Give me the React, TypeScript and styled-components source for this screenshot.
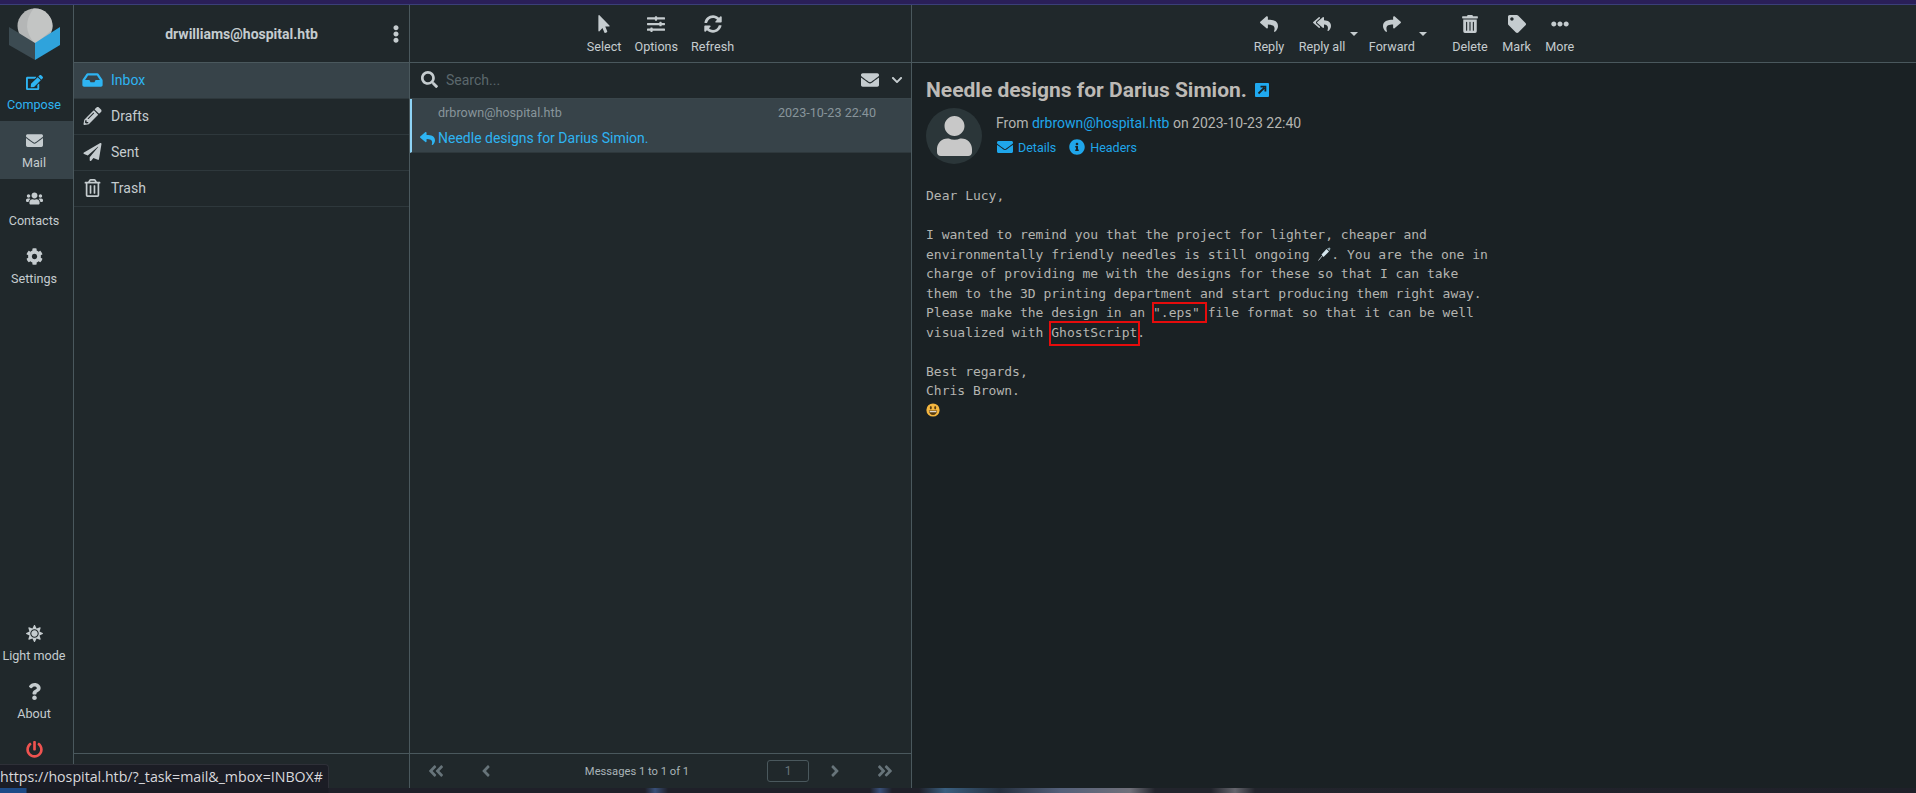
import React from 'react';
import styled, { createGlobalStyle } from 'styled-components';
import {
  FaEdit, FaEnvelope, FaUsers, FaCog, FaSun, FaQuestion, FaPowerOff, FaInbox, FaPencilAlt, FaPaperPlane,
  FaRegTrashAlt, FaEllipsisV, FaMousePointer, FaSlidersH, FaSyncAlt, FaSearch, FaChevronDown, FaReply,
  FaReplyAll, FaShare, FaTrashAlt, FaTag, FaEllipsisH, FaAngleDoubleLeft, FaAngleDoubleRight, FaAngleLeft,
  FaAngleRight, FaInfoCircle, FaUser,
} from 'react-icons/fa';

const Global = createGlobalStyle`
  html, body { margin: 0; padding: 0; height: 100%; background: #1f2029; overflow: hidden; }
  #root { height: 100%; }
  * { box-sizing: border-box; }
`;

const Page = styled.div`
  height: 793px; display: flex; flex-direction: column; position: relative;
  font-family: Roboto, "Liberation Sans", sans-serif; color: #c5cccf; font-size: 14px;
`;
const TopStrip = styled.div`
  height: 5px; flex: none; background: #2a1f58; border-bottom: 1px solid #3a3f78;
`;
const BottomStrip = styled.div`
  height: 5px; flex: none;
  background: linear-gradient(90deg, #1d4a86 0, #1d4a86 26px, #1a1c24 27px, #1a1c24 328px, #1f2029 329px, #1f2029 645px, #39507a 655px, #1f2029 668px, #1f2029 870px, #39507a 880px, #1f2029 892px, #1f2029 919px, #3a5f80 945px, #25303f 1000px, #54607a 1060px, #70707a 1130px, #22242c 1155px, #22242c 1211px, #66666e 1235px, #22242c 1255px, #1f2029 100%);
`;
const Main = styled.div`
  flex: 1; min-height: 0; display: flex;
`;
const Sidebar = styled.nav`
  width: 74px; flex: none; display: flex; flex-direction: column; background: #20282b;
  border-right: 1px solid #4a585d;
`;
const Logo = styled.div`
  height: 58px; flex: none; display: flex; align-items: flex-start; justify-content: flex-start;
`;
const Spacer = styled.div`
  flex: 1;
`;
const NavItem = styled.div<{ $active?: boolean; $accent?: boolean; $danger?: boolean }>`
  height: 58px; flex: none; display: flex; flex-direction: column; align-items: center; padding: 11px 5px 0 0;
  font-size: 12.6px; line-height: 16px; white-space: nowrap;
  background: ${p => (p.$active ? '#374349' : 'transparent')};
  color: ${p => (p.$accent ? '#2eb4f2' : p.$danger ? '#ef5350' : '#c5cccf')};
  svg { height: 17px; width: auto; margin-bottom: 6px; flex: none; }
`;
const FolderColumn = styled.section`
  width: 336px; flex: none; display: flex; flex-direction: column; background: #20282b;
  border-right: 1px solid #4a585d;
`;
const ListColumn = styled.section`
  width: 502px; flex: none; display: flex; flex-direction: column; background: #20282b;
  border-right: 1px solid #4a585d;
`;
const ContentColumn = styled.section`
  flex: 1; min-width: 0; display: flex; flex-direction: column; background: #1a2124;
`;
const HeaderBar = styled.header`
  height: 58px; flex: none; background: #20282b; border-bottom: 1px solid #4a585d;
  display: flex; justify-content: center; align-items: flex-start; padding-top: 10px;
`;
const MailToolbar = styled(HeaderBar)`
  gap: 1.5px;
`;
const AccountBar = styled.header`
  height: 58px; flex: none; border-bottom: 1px solid #4a585d;
  display: grid; grid-template-columns: 1fr auto 1fr; align-items: center;
`;
const Account = styled.div`
  grid-column: 2; font-weight: 700; font-size: 14px; color: #c5cccf;
`;
const Kebab = styled.div`
  grid-column: 3; justify-self: end; padding-right: 4px; display: flex;
  svg { width: 18px; height: 18px; }
`;
const FolderList = styled.ul`
  list-style: none; margin: 0; padding: 0; flex: 1;
`;
const FolderRow = styled.li<{ $active?: boolean }>`
  height: 36px; display: flex; align-items: center; padding: 0 0 2px 8px;
  border-bottom: 1px solid #2e383c;
  background: ${p => (p.$active ? '#374349' : 'transparent')};
  color: ${p => (p.$active ? '#2eb4f2' : '#c5cccf')};
  font-size: 14px;
  svg { width: 21px; height: 18px; margin-right: 8px; flex: none; }
`;
const FolderFooter = styled.div`
  height: 35px; flex: none; border-top: 1px solid #4a585d;
`;
const ToolButton = styled.div<{ $caret?: boolean; $push?: boolean }>`
  position: relative; display: flex; flex-direction: column; align-items: center; padding: 0 6.5px;
  font-size: 12.6px; line-height: 16px; color: #c5cccf; white-space: nowrap;
  margin-right: ${p => (p.$caret ? '9px' : '0')};
  margin-left: ${p => (p.$push ? '14px' : '0')};
  svg { width: 18px; height: 18px; margin-bottom: 6px; flex: none; }
`;
const Caret = styled.span`
  position: absolute; right: -6px; top: 17px; width: 0; height: 0;
  border-left: 4px solid transparent; border-right: 4px solid transparent; border-top: 4px solid #c5cccf;
`;
const SearchBar = styled.div`
  height: 36px; flex: none; display: flex; align-items: center; padding: 0 8px 2px 11px;
  border-bottom: 1px solid #3a464b; color: #c5cccf;
  svg { flex: none; }
`;
const Placeholder = styled.span`
  flex: 1; margin-left: 8px; color: #5b676c; font-size: 14px;
`;
const SearchEnvelope = styled(FaEnvelope)`
  width: 18px; height: 18px; margin-right: 12px;
`;
const MessageList = styled.div`
  flex: 1; min-height: 0;
`;
const MessageRow = styled.div`
  height: 54px; background: #374349; border-left: 2px solid #8ed4f6; border-bottom: 1px solid #2e383c;
  display: flex; flex-direction: column; padding: 1px 35px 0 8px;
`;
const MessageTop = styled.div`
  display: flex; justify-content: space-between; padding-left: 18px; height: 24px; align-items: center;
  font-size: 12.6px; color: #88959b;
`;
const MessageSubject = styled.div`
  display: flex; align-items: center; color: #2eb4f2; font-size: 14px; margin-top: 2px; height: 24px;
  svg { width: 15px; height: 15px; margin-right: 3px; flex: none; }
`;
const Pager = styled.footer`
  height: 35px; flex: none; border-top: 1px solid #4a585d; display: flex; align-items: center; color: #67747a;
  padding: 0 1px;
`;
const PageButton = styled.span`
  width: 50px; flex: none; display: flex; justify-content: center;
  svg { width: 18px; height: 18px; }
`;
const PageInfo = styled.span`
  flex: 1; text-align: center; font-size: 11.2px; color: #a9b3b7; margin-right: 4px;
`;
const PageBox = styled.span`
  width: 42px; height: 22px; flex: none; margin-right: 1px; border: 1px solid #4a585d; border-radius: 3px;
  display: flex; align-items: center; justify-content: center; font-size: 12px; color: #67747a;
`;
const MessageBody = styled.article`
  flex: 1; min-height: 0; padding: 14px 14px;
`;
const Subject = styled.h2`
  margin: 0; height: 26px; display: flex; align-items: center; font-size: 21px; font-weight: 700; color: #bdbab6;
  svg { margin-left: 8px; flex: none; }
`;
const Sender = styled.div`
  display: flex; margin-top: 5px;
`;
const Avatar = styled.div`
  width: 56px; height: 56px; border-radius: 50%; background: #2b3639; flex: none; overflow: hidden;
  display: flex; align-items: center; justify-content: center; color: #c8c8c8;
  svg { width: 37px; height: 40px; }
`;
const SenderInfo = styled.div`
  margin-left: 14px; padding-top: 3px; color: #b4b4b0; font-size: 14px;
`;
const FromLine = styled.div`
  height: 24px; line-height: 24px; white-space: nowrap;
`;
const Link = styled.a`
  color: #1fa6ea;
`;
const LinkRow = styled.div`
  display: flex; align-items: center; height: 24px; font-size: 12.5px; color: #1fa6ea;
  svg { width: 16px; height: 16px; margin-left: 1px; margin-right: 5px; flex: none; }
  span { margin-right: 12px; }
`;
const Mono = styled.div`
  margin-top: 22px; font-family: "DejaVu Sans Mono", "Liberation Mono", monospace; font-size: 13px;
  color: #b4b4b0;
`;
const MonoLine = styled.p`
  margin: 0; height: 19.55px; line-height: 19.55px; white-space: pre;
`;
const Marked = styled.span<{ $tall?: boolean }>`
  position: relative;
  &::after {
    content: ""; position: absolute;
    left: ${p => (p.$tall ? '-2px' : '-1px')}; right: ${p => (p.$tall ? '-3px' : '-7px')};
    top: ${p => (p.$tall ? '-4px' : '-3px')}; bottom: ${p => (p.$tall ? '-6px' : '-3px')};
    border: 2px solid #e60c0c;
  }
`;
const InlineIcon = styled.svg`
  width: 14px; height: 14px; vertical-align: -2px;
`;
const StatusTip = styled.div`
  position: absolute; left: 0; bottom: 5px; height: 24px; width: 329px; line-height: 24px;
  background: #1b1d25; border: 1px solid #2e3038; border-left: 0; border-bottom: 0; border-top-right-radius: 4px;
  font-family: "Open Sans", "Noto Sans", sans-serif; font-size: 14.2px; color: #d8d8dc; white-space: nowrap;
`;

const LogoMark = () => (
  <svg width="73" height="58" viewBox="0 0 73 58" aria-hidden="true">
    <circle cx="35" cy="21" r="17.5" fill="#b4b6b6" />
    <path d="M33.5 3.6 A17.5 17.5 0 0 1 52 25 L35 39 Q20 22 33.5 3.6Z" fill="#c3c5c4" />
    <polygon points="9,22 35,38 35,55 9,40" fill="#3c4b52" />
    <polygon points="35,38 60,22 60,40 35,55" fill="#2fa3dc" />
  </svg>
);
const OpenNew = () => (
  <svg width="14" height="14" viewBox="0 0 14 14" aria-hidden="true">
    <rect width="14" height="14" rx="1" fill="#1fa9f0" />
    <path d="M3.5 10.5 L9.2 4.8 M5.5 3.6 H10.4 V8.5" stroke="#1a2124" strokeWidth="1.8" fill="none" />
  </svg>
);
const Needle = () => (
  <InlineIcon viewBox="0 0 14 14" aria-hidden="true">
    <path d="M1.5 13.5 L5.5 8.5" stroke="#b6c0c6" strokeWidth="1" />
    <path d="M4.5 7.5 L9.5 2 L12 4.5 L6.5 10Z" fill="#d5e6ee" />
    <path d="M10 1.5 L12.5 0.5 L13.5 1.5 L12.5 4Z" fill="#8aa0aa" />
  </InlineIcon>
);
const Smiley = () => (
  <InlineIcon viewBox="0 0 14 14" aria-hidden="true">
    <circle cx="7" cy="7" r="6.6" fill="#f4b63f" />
    <ellipse cx="4.8" cy="4.8" rx="1" ry="1.8" fill="#5a3d10" />
    <ellipse cx="9.2" cy="4.8" rx="1" ry="1.8" fill="#5a3d10" />
    <path d="M2.8 7.6 H11.2 Q10.6 12 7 12 Q3.4 12 2.8 7.6Z" fill="#5a3d10" />
    <path d="M3.6 8.2 H10.4 V9.2 H3.6Z" fill="#fff" />
  </InlineIcon>
);

export default function App() {
  return (
    <Page>
      <Global />
      <TopStrip />
      <Main>
        <Sidebar>
          <Logo><LogoMark /></Logo>
          <NavItem $accent><FaEdit />Compose</NavItem>
          <NavItem $active><FaEnvelope />Mail</NavItem>
          <NavItem><FaUsers />Contacts</NavItem>
          <NavItem><FaCog />Settings</NavItem>
          <Spacer />
          <NavItem><FaSun />Light mode</NavItem>
          <NavItem><FaQuestion />About</NavItem>
          <NavItem $danger><FaPowerOff />Logout</NavItem>
        </Sidebar>
        <FolderColumn>
          <AccountBar>
            <Account>drwilliams@hospital.htb</Account>
            <Kebab><FaEllipsisV /></Kebab>
          </AccountBar>
          <FolderList>
            <FolderRow $active><FaInbox />Inbox</FolderRow>
            <FolderRow><FaPencilAlt />Drafts</FolderRow>
            <FolderRow><FaPaperPlane />Sent</FolderRow>
            <FolderRow><FaRegTrashAlt />Trash</FolderRow>
          </FolderList>
          <FolderFooter />
        </FolderColumn>
        <ListColumn>
          <HeaderBar>
            <ToolButton><FaMousePointer />Select</ToolButton>
            <ToolButton><FaSlidersH />Options</ToolButton>
            <ToolButton><FaSyncAlt />Refresh</ToolButton>
          </HeaderBar>
          <SearchBar>
            <FaSearch size={17} />
            <Placeholder>Search...</Placeholder>
            <SearchEnvelope />
            <FaChevronDown size={12} />
          </SearchBar>
          <MessageList>
            <MessageRow>
              <MessageTop><span>drbrown@hospital.htb</span><span>2023-10-23 22:40</span></MessageTop>
              <MessageSubject><FaReply />Needle designs for Darius Simion.</MessageSubject>
            </MessageRow>
          </MessageList>
          <Pager>
            <PageButton><FaAngleDoubleLeft /></PageButton>
            <PageButton><FaAngleLeft /></PageButton>
            <PageInfo>Messages 1 to 1 of 1</PageInfo>
            <PageBox>1</PageBox>
            <PageButton><FaAngleRight /></PageButton>
            <PageButton><FaAngleDoubleRight /></PageButton>
          </Pager>
        </ListColumn>
        <ContentColumn>
          <MailToolbar>
            <ToolButton><FaReply />Reply</ToolButton>
            <ToolButton $caret><FaReplyAll />Reply all<Caret /></ToolButton>
            <ToolButton $caret><FaShare />Forward<Caret /></ToolButton>
            <ToolButton $push><FaTrashAlt />Delete</ToolButton>
            <ToolButton><FaTag />Mark</ToolButton>
            <ToolButton><FaEllipsisH />More</ToolButton>
          </MailToolbar>
          <MessageBody>
            <Subject>Needle designs for Darius Simion.<OpenNew /></Subject>
            <Sender>
              <Avatar><FaUser /></Avatar>
              <SenderInfo>
                <FromLine>From <Link>drbrown@hospital.htb</Link> on 2023-10-23 22:40</FromLine>
                <LinkRow><FaEnvelope /><span>Details</span><FaInfoCircle /><span>Headers</span></LinkRow>
              </SenderInfo>
            </Sender>
            <Mono>
              <MonoLine>Dear Lucy,</MonoLine>
              <MonoLine />
              <MonoLine>I wanted to remind you that the project for lighter, cheaper and</MonoLine>
              <MonoLine>environmentally friendly needles is still ongoing <Needle />. You are the one in</MonoLine>
              <MonoLine>charge of providing me with the designs for these so that I can take</MonoLine>
              <MonoLine>them to the 3D printing department and start producing them right away.</MonoLine>
              <MonoLine>Please make the design in an <Marked>".eps"</Marked> file format so that it can be well</MonoLine>
              <MonoLine>visualized with <Marked $tall>GhostScript</Marked>.</MonoLine>
              <MonoLine />
              <MonoLine>Best regards,</MonoLine>
              <MonoLine>Chris Brown.</MonoLine>
              <MonoLine><Smiley /></MonoLine>
            </Mono>
          </MessageBody>
        </ContentColumn>
      </Main>
      <BottomStrip />
      <StatusTip>https://hospital.htb/?_task=mail&amp;_mbox=INBOX#</StatusTip>
    </Page>
  );
}
